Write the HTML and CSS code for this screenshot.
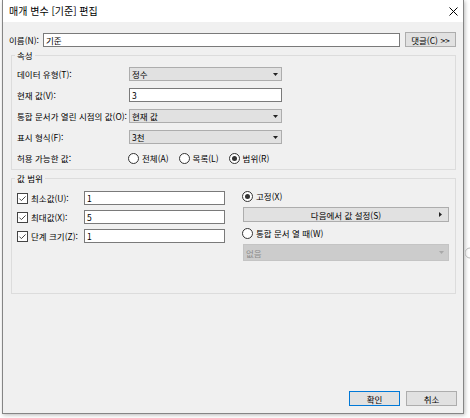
FILE: index.html
```html
<!DOCTYPE html>
<html lang="ko">
<head>
<meta charset="utf-8">
<link rel="stylesheet" href="styles.css">
</head>
<body>
<div class="window">
  <div class="titlebar">
    <span class="title">매개 변수 [기준] 편집</span>
    <svg class="close" viewBox="0 0 9 9" width="9" height="9"><path d="M0.5 0.5L8.5 8.5M8.5 0.5L0.5 8.5" stroke="#000" stroke-width="1"/></svg>
  </div>
  <div class="content">
    <div class="name-row">
      <span class="name-label">이름(N):</span>
      <div class="input name-input">기준</div>
      <div class="btn btn-comment">댓글(C) &gt;&gt;</div>
    </div>

    <fieldset class="group props">
      <legend>속성</legend>
      <div class="grid">
        <span class="lbl">데이터 유형(T):</span>
        <div class="select"><span>정수</span><svg class="arrow" viewBox="0 0 5 3" width="5" height="3"><path d="M0 0H5L2.5 3Z" fill="#222"/></svg></div>

        <span class="lbl">현재 값(V):</span>
        <div class="input">3</div>

        <span class="lbl">통합 문서가 열린 시점의 값(O):</span>
        <div class="select"><span>현재 값</span><svg class="arrow" viewBox="0 0 5 3" width="5" height="3"><path d="M0 0H5L2.5 3Z" fill="#222"/></svg></div>

        <span class="lbl">표시 형식(F):</span>
        <div class="select"><span>3천</span><svg class="arrow" viewBox="0 0 5 3" width="5" height="3"><path d="M0 0H5L2.5 3Z" fill="#222"/></svg></div>

        <span class="lbl">허용 가능한 값:</span>
        <div class="radios">
          <span class="radio"><svg viewBox="0 0 11 11" width="11" height="11"><circle cx="5.5" cy="5.5" r="5" fill="#fff" stroke="#333"/></svg>전체(A)</span>
          <span class="radio"><svg viewBox="0 0 11 11" width="11" height="11"><circle cx="5.5" cy="5.5" r="5" fill="#fff" stroke="#333"/></svg>목록(L)</span>
          <span class="radio"><svg viewBox="0 0 11 11" width="11" height="11"><circle cx="5.5" cy="5.5" r="5" fill="#fff" stroke="#333"/><circle cx="5.5" cy="5.5" r="2.5" fill="#333"/></svg>범위(R)</span>
        </div>
      </div>
    </fieldset>

    <fieldset class="group range">
      <legend>값 범위</legend>
      <div class="range-body">
        <div class="range-left">
          <div class="crow">
            <span class="check"><svg viewBox="0 0 11 11" width="11" height="11"><rect x="0.5" y="0.5" width="10" height="10" fill="#fff" stroke="#444"/><path d="M2.4 5.6L4.4 7.6L8.6 3.4" fill="none" stroke="#333" stroke-width="0.9"/></svg>최소값(U):</span>
            <div class="input small">1</div>
          </div>
          <div class="crow">
            <span class="check"><svg viewBox="0 0 11 11" width="11" height="11"><rect x="0.5" y="0.5" width="10" height="10" fill="#fff" stroke="#444"/><path d="M2.4 5.6L4.4 7.6L8.6 3.4" fill="none" stroke="#333" stroke-width="0.9"/></svg>최대값(X):</span>
            <div class="input small">5</div>
          </div>
          <div class="crow">
            <span class="check"><svg viewBox="0 0 11 11" width="11" height="11"><rect x="0.5" y="0.5" width="10" height="10" fill="#fff" stroke="#444"/><path d="M2.4 5.6L4.4 7.6L8.6 3.4" fill="none" stroke="#333" stroke-width="0.9"/></svg>단계 크기(Z):</span>
            <div class="input small">1</div>
          </div>
        </div>
        <div class="range-right">
          <span class="radio rrow"><svg viewBox="0 0 11 11" width="11" height="11"><circle cx="5.5" cy="5.5" r="5" fill="#fff" stroke="#333"/><circle cx="5.5" cy="5.5" r="2.5" fill="#333"/></svg>고정(X)</span>
          <div class="btn btn-set"><span>다음에서 값 설정(S)</span><svg class="rarrow" viewBox="0 0 3 5" width="3" height="5"><path d="M0 0V5L3 2.5Z" fill="#222"/></svg></div>
          <span class="radio rrow"><svg viewBox="0 0 11 11" width="11" height="11"><circle cx="5.5" cy="5.5" r="5" fill="#fff" stroke="#333"/></svg>통합 문서 열 때(W)</span>
          <div class="select disabled"><span>없음</span><svg class="arrow" viewBox="0 0 5 3" width="5" height="3"><path d="M0 0H5L2.5 3Z" fill="#a8a8a8"/></svg></div>
        </div>
      </div>
    </fieldset>

    <div class="footer">
      <div class="btn btn-ok">확인</div>
      <div class="btn">취소</div>
    </div>
  </div>
</div>
<svg class="bg-arc" viewBox="0 0 6 12" width="6" height="12"><path d="M5 1A5 5 0 0 0 5 11" fill="none" stroke="#b8b8b8"/></svg>
</body>
</html>
```
FILE: styles.css
```css
* { box-sizing: border-box; }
html, body { margin: 0; padding: 0; }
body {
  width: 470px;
  height: 418px;
  background: #fff;
  font-family: "Noto Sans CJK KR", "Noto Sans", sans-serif;
  font-size: 8.5px;
  line-height: 12px;
  color: #000;
  overflow: hidden;
  position: relative;
}
.window {
  margin-left: 2px;
  width: 462px;
  height: 414px;
  border: 1px solid #858585;
  border-top: none;
  box-shadow: 1px 1px 4px rgba(0,0,0,0.28);
  background: #f0f0f0;
  display: flex;
  flex-direction: column;
}
.titlebar {
  height: 22px;
  flex: none;
  background: #fff;
  display: flex;
  align-items: center;
  justify-content: space-between;
  padding: 0 5px 0 6px;
}
.title { font-size: 10px; line-height: 12px; }
.close { display: block; }
.content {
  flex: 1;
  display: flex;
  flex-direction: column;
  padding: 10px 6px 7px 6px;
}
.name-row { display: flex; align-items: center; height: 15px; }
.name-label { width: 34px; }
.input {
  height: 14px;
  background: #fff;
  border: 1px solid #7a7a7a;
  padding: 0 2px;
  line-height: 12px;
  white-space: nowrap;
}
.name-input { width: 357px; }
.btn {
  height: 15px;
  width: 51px;
  background: #e1e1e1;
  border: 1px solid #adadad;
  display: flex;
  align-items: center;
  justify-content: center;
  line-height: 12px;
}
.btn-comment { margin-left: 5px; }
.group {
  margin: 2px 1px 0 2px;
  border: 1px solid #dcdcdc;
  padding: 6px 6px 4px 5px;
  min-width: 0;
}
.group legend {
  padding: 0 2px;
  margin-left: -2px;
  line-height: 12px;
}
.grid {
  display: grid;
  grid-template-columns: 112px 153px;
  grid-auto-rows: 14px;
  row-gap: 7px;
  align-items: center;
}
.lbl { white-space: nowrap; }
.select {
  height: 14px;
  background: #e1e1e1;
  border: 1px solid #adadad;
  display: flex;
  align-items: center;
  justify-content: space-between;
  padding: 0 3px 0 2px;
}
.select .arrow { display: block; }
.radios { display: flex; align-items: center; gap: 10px; margin-left: -1px; }
.radio { display: inline-flex; align-items: center; gap: 3px; white-space: nowrap; }
.radio svg, .check svg { display: block; flex: none; }

.range { padding: 6px 6px 0 5px; height: 122px; }
.range-body { display: flex; gap: 18px; }
.range-left { display: flex; flex-direction: column; gap: 5px; padding-top: 1px; width: 208px; }
.crow { display: flex; align-items: center; height: 14px; }
.check { display: inline-flex; align-items: center; gap: 3px; width: 67px; white-space: nowrap; }
.input.small { width: 141px; }
.range-right { display: flex; flex-direction: column; width: 206px; gap: 5px; }
.rrow { height: 12px; margin-left: -1px; }
.btn-set { width: 206px; height: 15px; position: relative; }
.btn-set .rarrow { position: absolute; right: 6px; top: 4px; }
.select.disabled {
  height: 17px;
  background: #cccccc;
  border-color: #c4c4c4;
  color: #8c8c8c;
  padding: 0 4px 0 2px;
}
.footer {
  margin-top: auto;
  display: flex;
  justify-content: flex-end;
  gap: 6px;
}
.btn-ok { border-color: #0078d7; }
.bg-arc { position: absolute; left: 465px; top: 247px; }
```
